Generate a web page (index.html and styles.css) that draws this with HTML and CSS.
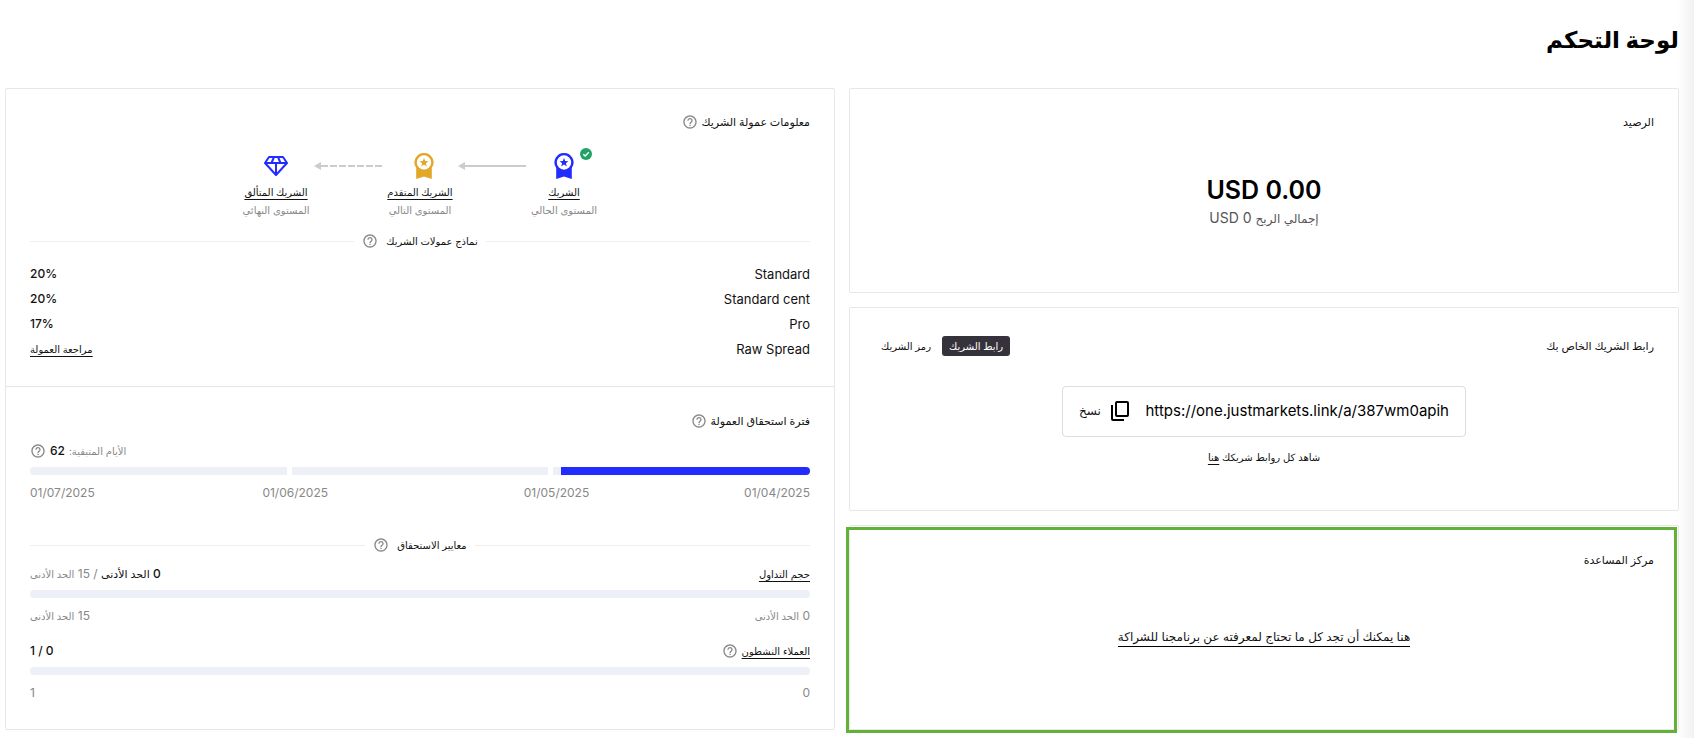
FILE: index.html
```html
<!DOCTYPE html>
<html lang="ar" dir="rtl">
<head>
<meta charset="utf-8">
<meta name="viewport" content="width=device-width, initial-scale=1">
<title>لوحة التحكم</title>
<link rel="stylesheet" href="styles.css">
</head>
<body>
<svg class="sprite" aria-hidden="true">
  <symbol id="help" viewBox="0 0 24 24"><path d="M11 18h2v-2h-2v2zm1-16C6.480 2 2 6.480 2 12s4.480 10 10 10 10-4.480 10-10S17.520 2 12 2zm0 18c-4.410 0-8-3.590-8-8s3.590-8 8-8 8 3.590 8 8-3.590 8-8 8zm0-14c-2.210 0-4 1.790-4 4h2c0-1.100.9-2 2-2s2 .9 2 2c0 2-3 1.750-3 5h2c0-2.250 3-2.500 3-5 0-2.210-1.790-4-4-4z"/></symbol>
  <symbol id="medal" viewBox="0 0 20 26"><path fill-rule="evenodd" d="M10 0a9.500 9.500 0 0 1 7.800 15V26L10 23.600 2.200 26V15A9.500 9.500 0 0 1 10 0zm0 2.300a7.200 7.200 0 1 0 0 14.400 7.200 7.200 0 0 0 0-14.400z"/><path d="M10 5l1.200 3 3.200.2-2.500 2 .9 3.200-2.800-1.800-2.800 1.800.9-3.200-2.500-2 3.200-.2z"/></symbol>
</svg>
<main class="page">
  <h1 class="page-title">لوحة التحكم</h1>
  <div class="board">
    <div class="column">
      <section class="card balance">
        <h2 class="heading">الرصيد</h2>
        <p class="amount" dir="ltr">USD 0.00</p>
        <p class="profit"><span class="ar">إجمالي الربح</span> <bdi dir="ltr">USD 0</bdi></p>
      </section>
      <section class="card link-card">
        <div class="card-head">
          <h2 class="heading">رابط الشريك الخاص بك</h2>
          <div class="tabs">
            <button class="tab tab-active" type="button">رابط الشريك</button>
            <button class="tab" type="button">رمز الشريك</button>
          </div>
        </div>
        <div class="copy-box">
          <input class="copy-url" type="text" dir="ltr" readonly aria-label="رابط الشريك" value="https://one.justmarkets.link/a/387wm0apih">
          <button class="copy-button" type="button">
            <svg class="copy-icon" viewBox="0 0 18 20" aria-hidden="true"><rect x="5" y="1" width="12" height="14" rx="1"/><path d="M1 4v14q0 1 1 1h11"/></svg>
            نسخ
          </button>
        </div>
        <p class="all-links">شاهد كل روابط شريكك <a href="#links">هنا</a></p>
      </section>
      <section class="card help-card">
        <h2 class="heading">مركز المساعدة</h2>
        <a class="help-link" href="#help-center">هنا يمكنك أن تجد كل ما تحتاج لمعرفته عن برنامجنا للشراكة</a>
      </section>
    </div>

    <div class="card info">
      <section class="commission">
        <h2 class="heading">معلومات عمولة الشريك <svg class="help"><use href="#help"/></svg></h2>
        <div class="levels">
          <div class="level">
            <span class="level-icon"><svg class="medal blue"><use href="#medal"/></svg>
              <svg class="check" viewBox="0 0 12 12"><circle cx="6" cy="6" r="6"/><path d="M3.300 6.200l1.900 1.800 3.600-3.700"/></svg></span>
            <a class="level-name" href="#partner">الشريك</a>
            <span class="level-note">المستوى الحالي</span>
          </div>
          <svg class="arrow" viewBox="0 0 68 8"><path d="M68 4H6"/><path class="tip" d="M0 4l7-4v8z"/></svg>
          <div class="level">
            <span class="level-icon level-icon-next"><svg class="medal gold"><use href="#medal"/></svg></span>
            <a class="level-name" href="#advanced">الشريك المتقدم</a>
            <span class="level-note">المستوى التالي</span>
          </div>
          <svg class="arrow" viewBox="0 0 68 8"><path class="dashes" d="M68 4H6"/><path class="tip" d="M0 4l7-4v8z"/></svg>
          <div class="level">
            <span class="level-icon"><svg class="diamond" viewBox="0 0 24 22"><path d="M5 2h14l4 6-11 12L1 8zM1 8h22M12 8v12M10 2L7.500 8M14 2l2.500 6"/></svg></span>
            <a class="level-name" href="#brilliant">الشريك المتألق</a>
            <span class="level-note">المستوى النهائي</span>
          </div>
        </div>
        <h3 class="divider">نماذج عمولات الشريك <svg class="help"><use href="#help"/></svg></h3>
        <table class="rates">
          <tr><th scope="row">Standard</th><td>20%</td></tr>
          <tr><th scope="row">Standard cent</th><td>20%</td></tr>
          <tr><th scope="row">Pro</th><td>17%</td></tr>
          <tr><th scope="row">Raw Spread</th><td><a class="ar" href="#review">مراجعة العمولة</a></td></tr>
        </table>
      </section>
      <section class="period">
        <h2 class="heading">فترة استحقاق العمولة <svg class="help"><use href="#help"/></svg></h2>
        <p class="days"><span class="muted ar">الأيام المتبقية:</span> <b>62</b> <svg class="help"><use href="#help"/></svg></p>
        <div class="months"><span class="bar"><span class="bar-fill" style="width:97%"></span></span><span class="bar"></span><span class="bar"></span></div>
        <div class="dates"><span>01/04/2025</span><span>01/05/2025</span><span>01/06/2025</span><span>01/07/2025</span></div>
        <h3 class="divider criteria">معايير الاستحقاق <svg class="help"><use href="#help"/></svg></h3>
        <div class="row">
          <a class="ar" href="#volume">حجم التداول</a>
          <span class="muted"><b class="current">0 <span class="ar">الحد الأدنى</span></b> / 15 <span class="ar">الحد الأدنى</span></span>
        </div>
        <div class="bar"></div>
        <div class="row limits"><span>0 <span class="ar">الحد الأدنى</span></span><span>15 <span class="ar">الحد الأدنى</span></span></div>
        <div class="row clients">
          <span class="with-help"><a class="ar" href="#clients">العملاء النشطون</a><svg class="help"><use href="#help"/></svg></span>
          <b>0 / 1</b>
        </div>
        <div class="bar"></div>
        <div class="row limits"><span>0</span><span>1</span></div>
      </section>
    </div>
  </div>
</main>
</body>
</html>
```
FILE: styles.css
```css
* { box-sizing: border-box; }
body {
  margin: 0;
  background: linear-gradient(to left, #f1f1f1, #fff 16px);
  color: #111;
  font: 12px/20px Inter, "DejaVu Sans", sans-serif;
}
h1, h2, h3, p { margin: 0; }
a { color: inherit; text-underline-offset: 3px; }
button, input { font: inherit; color: inherit; border: 0; background: none; padding: 0; }
b { font-weight: 500; color: #111; }
.sprite { position: absolute; width: 0; height: 0; }
.ar { font-size: 10px; }
.muted { color: #888; }

.page { padding: 22px 15px 8px 5px; }
.page-title { font-size: 23px; line-height: 36px; font-weight: 700; color: #000; margin-bottom: 30px; }
.board { display: grid; grid-template-columns: 1fr 1fr; gap: 14px; }
.column { display: grid; grid-template-rows: repeat(3, 1fr); gap: 14px; }
.card { background: #fff; border: 1px solid #e7e7e8; border-radius: 2px; }
.column .card { padding: 24px; }
.heading { display: flex; align-items: center; gap: 4px; font-size: 11px; line-height: 20px; font-weight: 500; }
.help { width: 16px; height: 16px; fill: #888; flex: none; }

.column .balance { padding-top: 23px; text-align: center; }
.amount { margin-top: 42px; font-size: 25px; line-height: 32px; font-weight: 600; color: #000; }
.profit { font-size: 14px; line-height: 24px; color: #555; }
.profit .ar { font-size: 12px; }

.column .link-card { padding-top: 28px; }
.card-head { display: flex; justify-content: space-between; }
.tabs { display: flex; gap: 4px; }
.tab { padding: 0 7px; border-radius: 3px; font-size: 10px; line-height: 20px; }
.tab-active { background: #36323c; color: #fff; }
.copy-box {
  display: flex; align-items: center; gap: 16px;
  max-width: 404px; height: 51px; margin: 30px auto 10px; padding: 0 16px;
  border: 1px solid #dcdce2; border-radius: 4px;
}
.copy-url { flex: 1; min-width: 0; font-size: 15px; text-align: right; color: #000; }
.copy-button { display: flex; align-items: center; gap: 10px; font-size: 12px; }
.copy-icon { width: 18px; height: 20px; fill: none; stroke: #000; stroke-width: 2; }
.all-links { text-align: center; font-size: 10px; }

.help-card { position: relative; text-align: center; }
.help-card::after {
  content: ""; position: absolute; inset: 1px 1px -4px -4px;
  border: 3px solid #64b13a; pointer-events: none;
}
.help-link {
  display: inline-block; margin-top: 58px; line-height: 18px;
  text-decoration: none; border-bottom: 1px solid #000;
}

.commission { padding: 23px 24px 25px; border-bottom: 1px solid #e7e7e8; }
.period { padding: 24px 24px 26px; }
.levels { display: flex; justify-content: center; gap: 7px; margin: 16px 0 12px; }
.level { display: flex; flex-direction: column; align-items: center; width: 62px; font-size: 10px; line-height: 18px; white-space: nowrap; }
.level-icon { position: relative; display: flex; align-items: center; justify-content: center; width: 56px; height: 35px; }
.level-icon-next { padding-left: 8px; }
.level-name { font-weight: 500; }
.level-note { color: #888; }
.medal { width: 20px; height: 26px; }
.blue { fill: #222cff; }
.gold { fill: #e2a727; }
.diamond { width: 24px; height: 22px; fill: none; stroke: #222cff; stroke-width: 2; stroke-linejoin: round; }
.check { position: absolute; top: 0; right: 0; width: 12px; height: 12px; fill: #1fa463; }
.check path { fill: none; stroke: #fff; stroke-width: 1.500; }
.arrow { width: 68px; height: 8px; margin-top: 14px; fill: none; stroke: #ccc; stroke-width: 2; }
.arrow .tip { fill: #ccc; stroke: none; }
.dashes { stroke-dasharray: 7 2; }

.divider { display: flex; align-items: center; gap: 8px; font-size: 10px; line-height: 20px; font-weight: 500; }
.divider::before, .divider::after { content: ""; flex: 1; height: 1px; background: #eee; }
.criteria { margin: 32px 0 9px; }
.rates { width: 100%; margin-top: 10px; border-collapse: collapse; }
.rates th, .rates td { padding: 0; height: 25px; line-height: 20px; font-weight: 400; text-align: right; }
.rates th { font-size: 13px; }
.rates td { font-weight: 500; text-align: left; }

.days { display: flex; align-items: center; justify-content: flex-end; gap: 4px; margin: 10px 0 6px; }
.months { display: grid; grid-template-columns: repeat(3, 1fr); gap: 5px; overflow: hidden; border-radius: 4px; }
.bar { display: block; height: 8px; border-radius: 4px; background: #edf0f6; }
.months .bar { border-radius: 0; }
.bar-fill { display: block; height: 8px; background: #222cff; }
.dates { display: grid; grid-template-columns: 16fr 33fr 34fr 17fr; margin-top: 8px; color: #888; text-align: center; }
.dates span:first-child { text-align: right; }
.dates span:last-child { text-align: left; }
.row { display: flex; justify-content: space-between; margin-bottom: 6px; }
.current .ar { font-size: 11px; }
.limits { margin: 8px 0 0; color: #888; }
.clients { margin-top: 15px; }
.with-help { display: flex; align-items: center; gap: 4px; }
```
